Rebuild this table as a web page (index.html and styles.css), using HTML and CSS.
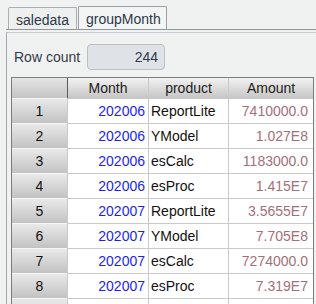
FILE: index.html
```html
<!DOCTYPE html>
<html>
<head>
<meta charset="utf-8">
<link rel="stylesheet" href="styles.css">
</head>
<body>
<div class="tabs">
  <div class="tab tab-a">saledata</div>
  <div class="tab tab-b active">groupMonth</div>
</div>
<div class="panel">
  <div class="rowcount">
    <span class="label">Row count</span>
    <div class="box">244</div>
  </div>
  <div class="grid">
    <div class="hd corner"></div>
    <div class="hd">Month</div>
    <div class="hd">product</div>
    <div class="hd">Amount</div>

    <div class="rh">1</div><div class="c m">202006</div><div class="c p">ReportLite</div><div class="c a">7410000.0</div>
    <div class="rh">2</div><div class="c m">202006</div><div class="c p">YModel</div><div class="c a">1.027E8</div>
    <div class="rh">3</div><div class="c m">202006</div><div class="c p">esCalc</div><div class="c a">1183000.0</div>
    <div class="rh">4</div><div class="c m">202006</div><div class="c p">esProc</div><div class="c a">1.415E7</div>
    <div class="rh">5</div><div class="c m">202007</div><div class="c p">ReportLite</div><div class="c a">3.5655E7</div>
    <div class="rh">6</div><div class="c m">202007</div><div class="c p">YModel</div><div class="c a">7.705E8</div>
    <div class="rh">7</div><div class="c m">202007</div><div class="c p">esCalc</div><div class="c a">7274000.0</div>
    <div class="rh">8</div><div class="c m">202007</div><div class="c p">esProc</div><div class="c a">7.319E7</div>
    <div class="rh"></div><div class="c m"></div><div class="c p"></div><div class="c a"></div>
  </div>
</div>
</body>
</html>
```
FILE: styles.css
```css
html, body {
  margin: 0;
  padding: 0;
  background: #f0f2f2;
  font-family: "Liberation Sans", Arial, sans-serif;
  font-size: 14px;
  overflow: hidden;
}
.tabs {
  display: flex;
  align-items: flex-end;
  height: 29px;
  margin-left: 6px;
  padding-left: 2px;
  border-bottom: 1px solid #8f959b;
}
.tab {
  box-sizing: border-box;
  height: 22px;
  border: 1px solid #a9aeb3;
  border-bottom: none;
  border-radius: 2px 2px 0 0;
  color: #2f3846;
  line-height: 22px;
  padding-top: 1px;
  padding-left: 7px;
  background: #eef0f0;
}
.tab-a { width: 69px; margin-right: 1px; }
.tab-b { width: 89px; }
.tab.active { background: #f3f5f5; height: 23px; border-color: #9ba0a6; }
.panel {
  margin-left: 6px;
  margin-top: 2px;
  border-left: 1px solid #a3a8ad;
  border-top: 1px solid #c7cbcf;
  height: 300px;
}
.rowcount {
  display: flex;
  align-items: center;
  padding-top: 11px;
  padding-left: 7px;
}
.label {
  color: #333b48;
  width: 73px;
}
.box {
  box-sizing: border-box;
  width: 78px;
  height: 26px;
  border: 1px solid #bcc0c6;
  border-radius: 4px;
  background: #dfe3e8;
  color: #333b48;
  text-align: right;
  padding-right: 6px;
  line-height: 24px;
}
.grid {
  display: grid;
  grid-template-columns: 55px 80px 79px 84px;
  grid-template-rows: 20px repeat(9, 24px);
  gap: 1px;
  background: #c9c9c9;
  border: 1px solid #7c7c7c;
  border-bottom: none;
  margin-top: 7px;
  margin-left: 4px;
  width: 301px;
}
.hd {
  background: linear-gradient(#f2f2f2, #c6c6c6);
  color: #1c1c1c;
  text-align: center;
  line-height: 20px;
}
.corner {
  background: linear-gradient(#e4e4e4, #c4c4c4);
  box-shadow: 1px 0 0 #5a5a5a;
}
.rh {
  background: linear-gradient(#e9e9e9, #c2c2c2);
  border-top: 1px solid #f6f6f6;
  margin-top: -1px;
  text-align: center;
  line-height: 25px;
  color: #111;
}
.c {
  background: #fff;
  line-height: 24px;
  white-space: nowrap;
  overflow: hidden;
}
.m { color: #1e1ef5; text-align: right; padding-right: 3px; }
.p { color: #111; padding-left: 2px; }
.a { color: #a3707a; text-align: right; padding-right: 5px; }
```
